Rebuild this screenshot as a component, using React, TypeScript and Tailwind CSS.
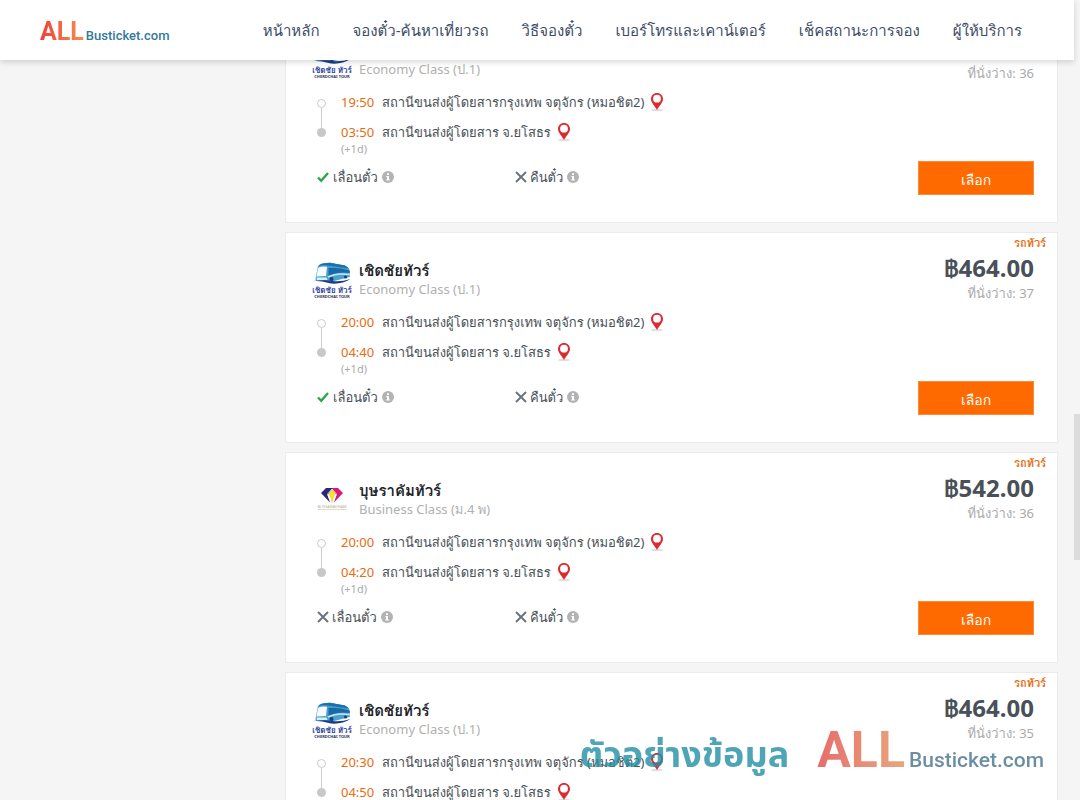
type Trip = {
  operator: string;
  logo: "cherdchai" | "bussarakham";
  busClass: string;
  depart: string;
  arrive: string;
  price: string;
  seats: number;
  reschedule: boolean;
};

const trips: Trip[] = [
  { operator: "เชิดชัยทัวร์", logo: "cherdchai", busClass: "Economy Class (ป.1)", depart: "19:50", arrive: "03:50", price: "464.00", seats: 36, reschedule: true },
  { operator: "เชิดชัยทัวร์", logo: "cherdchai", busClass: "Economy Class (ป.1)", depart: "20:00", arrive: "04:40", price: "464.00", seats: 37, reschedule: true },
  { operator: "บุษราคัมทัวร์", logo: "bussarakham", busClass: "Business Class (ม.4 พ)", depart: "20:00", arrive: "04:20", price: "542.00", seats: 36, reschedule: false },
  { operator: "เชิดชัยทัวร์", logo: "cherdchai", busClass: "Economy Class (ป.1)", depart: "20:30", arrive: "04:50", price: "464.00", seats: 35, reschedule: true },
];

const navItems = ["หน้าหลัก", "จองตั๋ว-ค้นหาเที่ยวรถ", "วิธีจองตั๋ว", "เบอร์โทรและเคาน์เตอร์", "เช็คสถานะการจอง", "ผู้ให้บริการ"];

function CherdchaiLogo() {
  return (
    <div className="flex h-10 w-[38px] shrink-0 flex-col items-center pt-0.5">
      <svg viewBox="0 0 38 23" className="h-[23px] w-[38px]" aria-hidden="true">
        <path d="M2.500 17 L4.500 6 Q5 2.500 9 1.500 L17 .7 L32 3.500 Q36 5 36.800 9 L36.800 15 L19 19.500 L3 18.500Z" fill="#4aa0cf" />
        <path d="M5 4 Q9 .8 17 .8 L32 3.500 L36 6.500 L18 4 Q10 2.500 5 4Z" fill="#1d6fab" />
        <path d="M5 6 Q9 4 14 4.800 L13 14 L3.500 14.500Z" fill="#f6fbfe" />
        <path d="M15.500 6 Q26 5 36.500 8.500 L36.700 11 Q27 9.500 19 12.500 L15.500 14Z" fill="#1a6aa8" />
        <path d="M15 15 Q24 10.500 36.700 12.500" stroke="#c9e6f2" strokeWidth="1.500" fill="none" />
        <path d="M3.500 15.500 L13.500 15.500 L14.500 18 L4 18Z" fill="#d9edf6" />
        <circle cx="18.500" cy="17" r="2" fill="#173f79" />
        <circle cx="32.500" cy="15" r="1.600" fill="#173f79" />
        <path d="M.5 18.800 Q13 17.500 22 19.200 Q30 19.500 37.500 17 Q29 22.500 18 21.500 Q9 18.800 .5 18.800Z" fill="#1b3d8a" />
      </svg>
      <span className="whitespace-nowrap text-[8px] leading-[10px] font-bold text-[#273a9c]">เชิดชัย ทัวร์</span>
      <span className="whitespace-nowrap text-[4px] leading-[3px] font-bold text-[#29345f]">CHERDCHAI TOUR</span>
    </div>
  );
}

function BussarakhamLogo() {
  return (
    <div className="flex h-10 w-[38px] shrink-0 flex-col items-center pt-2">
      <svg viewBox="0 0 22 16" className="h-4 w-[22px]" aria-hidden="true">
        <path d="M5 0 H11 L11 3 L6.500 7 L9.500 15 L0 5Z" fill="#29277e" />
        <path d="M17 0 H11 L11 3 L15.500 7 L12.500 15 L22 5Z" fill="#d9187b" />
        <path d="M11 1 Q12.500 3 14.500 5.500 L12.500 10 L11 16 L9.500 10 L7.500 5.500 Q9.500 3 11 1Z" fill="#f2e12d" />
        <path d="M11 1 L6.500 6 L10 15.500 M11 1 L15.500 6 L12 15.500" stroke="#fff" strokeWidth=".7" fill="none" />
      </svg>
      <span className="whitespace-nowrap text-[4px] leading-[5px] text-[#b0b0b0]">BUSSARAKHAM</span>
      <span className="h-px w-7 bg-[#e3ddb4]" />
    </div>
  );
}

function Pin() {
  return (
    <svg viewBox="0 0 14 20" className="h-5 w-3.5 shrink-0" aria-hidden="true">
      <ellipse cx="7" cy="18" rx="6" ry="1.300" fill="#e0e0e0" />
      <path d="M7 1C3.600 1 1 3.600 1 7c0 3.800 4 7 6 11 2-4 6-7.200 6-11 0-3.400-2.600-6-6-6Z" fill="#dc2a30" />
      <circle cx="7" cy="6.700" r="3.900" fill="#fff" />
    </svg>
  );
}

function Policy({ allowed, label }: { allowed: boolean; label: string }) {
  return (
    <div className="flex w-[198px] items-center whitespace-nowrap">
      {allowed ? (
        <svg viewBox="0 0 12 12" className="mr-1 size-3 shrink-0" aria-hidden="true">
          <path d="M1 6.500 L4.200 9.800 L11 2" fill="none" stroke="#28a745" strokeWidth="2.300" />
        </svg>
      ) : (
        <svg viewBox="0 0 12 12" className="mr-[3px] size-3 shrink-0" aria-hidden="true">
          <path d="M1 1 L11 11 M11 1 L1 11" fill="none" stroke="#6c757d" strokeWidth="2" />
        </svg>
      )}
      <span>{label}</span>
      <svg viewBox="0 0 12 12" className="ml-1 size-3 shrink-0" aria-hidden="true">
        <circle cx="6" cy="6" r="6" fill="#b3b3b3" />
        <path d="M5 2.200h2v1.800H5zM4.300 5H7v3.500h.8V9.600H4.200V8.500H5V6h-.7z" fill="#fff" />
      </svg>
    </div>
  );
}

function TripCard({ trip }: { trip: Trip }) {
  return (
    <article className="flex justify-between border border-[#ebebeb] bg-white pb-[27px]">
      <div className="pt-[27px] pb-2 pl-[27px]">
        <div className="flex gap-2">
          {trip.logo === "cherdchai" ? <CherdchaiLogo /> : <BussarakhamLogo />}
          <div className="whitespace-nowrap">
            <h2 className="text-[15px] leading-5 font-bold text-[#212529]">{trip.operator}</h2>
            <p className="text-[13px] leading-[18px] text-[#b0b0b0]">{trip.busClass}</p>
          </div>
        </div>
        <div className="mt-3 flex pl-1">
          <div className="flex w-6 flex-col items-start pt-[7px]">
            <span className="size-[9px] rounded-full border border-[#ccc]" />
            <span className="ml-1 h-5 w-px bg-[#ccc]" />
            <span className="size-[9px] rounded-full bg-[#c8c8c8]" />
          </div>
          <div className="flex flex-col text-[13px] leading-5 whitespace-nowrap">
            <div className="flex h-5 items-center">
              <span className="w-[41px] text-[#e96b10]">{trip.depart}</span>
              <span className="mr-1.5">สถานีขนส่งผู้โดยสารกรุงเทพ จตุจักร (หมอชิต2)</span>
              <Pin />
            </div>
            <div className="mt-2.5 flex h-5 items-center">
              <span className="w-[41px] text-[#e96b10]">{trip.arrive}</span>
              <span className="mr-1.5">สถานีขนส่งผู้โดยสาร จ.ยโสธร</span>
              <Pin />
            </div>
            <span className="text-[11px] leading-[14px] text-[#aaa]">(+1d)</span>
          </div>
        </div>
        <div className="mt-[11px] flex h-5 pl-1 text-[13px] leading-5">
          <Policy allowed={trip.reschedule} label="เลื่อนตั๋ว" />
          <Policy allowed={false} label="คืนตั๋ว" />
        </div>
      </div>
      <div className="flex flex-col items-end pr-[23px]">
        <span className="-mr-3 h-5 pt-0.5 text-[11px] leading-4 font-bold text-[#e96b10]">รถทัวร์</span>
        <strong className="text-[24px] leading-[30px] text-[#495057]">฿{trip.price}</strong>
        <span className="text-[13px] leading-5 text-[#aaa]">ที่นั่งว่าง: {trip.seats}</span>
        <button className="mt-auto h-[34px] w-[116px] border border-[#ff8a35] bg-[#ff6a00] pt-1 text-[14px] leading-5 font-medium text-white">เลือก</button>
      </div>
    </article>
  );
}

export default function App() {
  return (
    <div className="relative h-screen overflow-hidden bg-[#f5f5f5] font-['Noto_Sans','Loma','Noto_Sans_Thai',sans-serif] text-[#495057]">
      <header className="absolute inset-x-0 top-0 z-10 mr-1.5 flex h-[60px] items-center justify-between bg-white pr-[52px] pl-10 shadow-[0_2px_6px_rgba(0,0,0,0.16)]">
        <a href="#" className="flex items-baseline gap-0.5 pt-1 font-[Roboto,sans-serif]">
          <span className="bg-linear-to-r from-[#f03c3c] to-[#f88a4c] bg-clip-text text-[25px] leading-8 font-bold text-transparent">ALL</span>
          <span className="text-[13px] font-medium text-[#34799a]">Busticket.com</span>
        </a>
        <nav className="flex gap-[33px] text-[15px] whitespace-nowrap text-[#3d4b66]">
          {navItems.map((item) => (
            <a key={item} href="#">{item}</a>
          ))}
        </nav>
      </header>

      <main className="flex flex-col gap-[9px] pt-3 pr-[22px] pl-[285px]">
        {trips.map((trip) => (
          <TripCard key={trip.depart + trip.arrive} trip={trip} />
        ))}
      </main>

      <div className="absolute top-[414px] right-0 h-[146px] w-1.5 bg-[#dcdcdc]" />

      <div className="absolute right-9 bottom-4 flex items-baseline gap-7 whitespace-nowrap opacity-80">
        <span className="font-['Noto_Sans_Thai',sans-serif] text-[36px] leading-[56px] font-bold text-[#238fa3]">ตัวอย่างข้อมูล</span>
        <span className="flex items-baseline gap-1 font-[Roboto,sans-serif]">
          <span className="bg-linear-to-r from-[#e04848] to-[#e4905c] bg-clip-text text-[50px] leading-[56px] font-bold text-transparent">ALL</span>
          <span className="text-[21px] font-medium text-[#47738c]">Busticket.com</span>
        </span>
      </div>
    </div>
  );
}
